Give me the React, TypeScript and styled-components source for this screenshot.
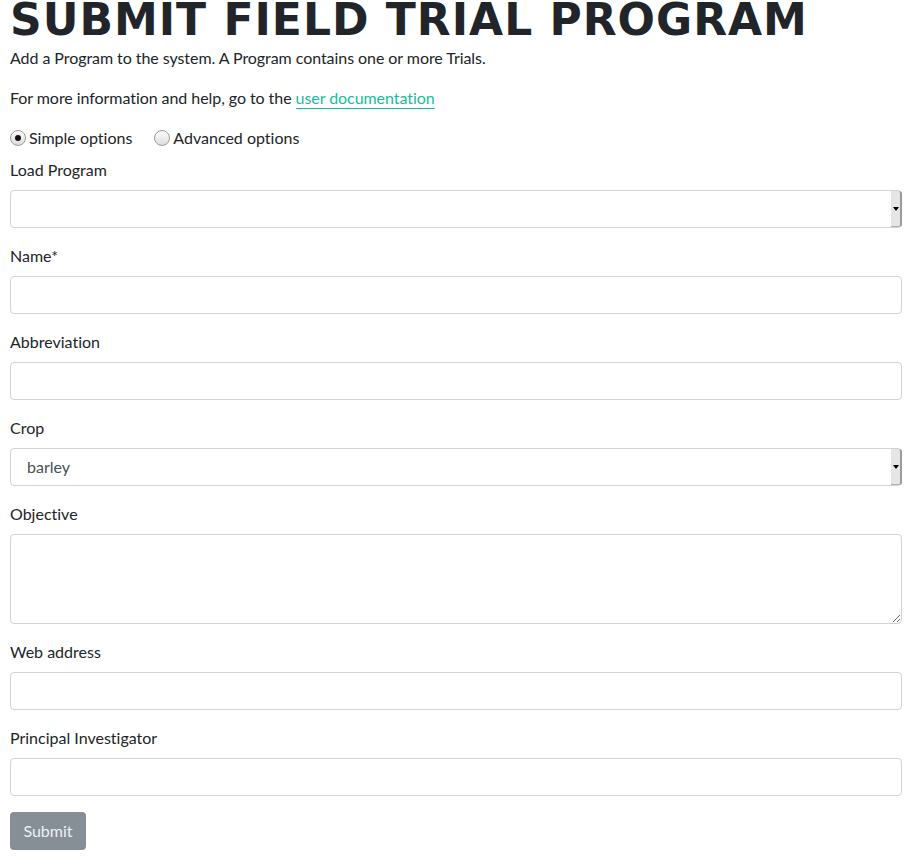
import React from "react";
import styled, { createGlobalStyle } from "styled-components";

const Global = createGlobalStyle`
  html, body { margin: 0; padding: 0; background: #fff; }
  body {
    font-family: Lato, "Liberation Sans", sans-serif;
    font-size: 16px;
    line-height: 24px;
    color: #212529;
    font-variant-ligatures: none;
  }
  * { box-sizing: border-box; }
`;

const Page = styled.div`
  width: 902px;
  padding: 0 0 0 10px;
  overflow: hidden;
`;

const Title = styled.h1`
  margin: -6px 0 0 0;
  font-family: "DejaVu Sans", sans-serif;
  font-weight: 700;
  font-size: 44px;
  line-height: 52px;
  letter-spacing: 1px;
  color: #212529;
  white-space: nowrap;
`;

const Para = styled.p`
  margin: 0 0 16px 0;
  letter-spacing: -0.06px;
`;

const Link = styled.a`
  color: #18bc9c;
  text-decoration: none;
  border-bottom: 1px solid #18bc9c;
  padding-bottom: 1px;
`;

const RadioRow = styled.div`
  display: flex;
  align-items: center;
  gap: 22px;
  height: 24px;
  margin-bottom: 8px;
`;

const RadioLabel = styled.label`
  display: flex;
  align-items: center;
  gap: 3px;
`;

const Radio = styled.input`
  appearance: none;
  -webkit-appearance: none;
  position: relative;
  width: 16px;
  height: 16px;
  margin: 0;
  border: 1px solid #9a9a9a;
  border-radius: 50%;
  background: linear-gradient(#fdfdfd, #dcdcdc);
  box-shadow: inset 0 1px 1px rgba(255, 255, 255, 0.8);
  &:checked::after {
    content: "";
    position: absolute;
    left: 4px;
    top: 4px;
    width: 6px;
    height: 6px;
    border-radius: 50%;
    background: #111;
  }
`;

const Group = styled.div`
  margin-bottom: 16px;
`;

const Label = styled.label`
  display: block;
  margin-bottom: 8px;
`;

const Input = styled.input`
  display: block;
  width: 100%;
  height: 38px;
  padding: 6px 12px;
  font: inherit;
  color: #495057;
  background: #fff;
  border: 1px solid #ced4da;
  border-radius: 4px;
  outline: none;
`;

const TextArea = styled.textarea`
  display: block;
  width: 100%;
  height: 90px;
  padding: 6px 12px;
  font: inherit;
  color: #495057;
  background: #fff;
  border: 1px solid #ced4da;
  border-radius: 4px;
  outline: none;
  resize: vertical;
`;

const SelectWrap = styled.div`
  position: relative;
  width: 100%;
`;

const Select = styled.select`
  display: block;
  width: 100%;
  height: 38px;
  padding: 6px 12px 6px 16px;
  font: inherit;
  color: #495057;
  background: #fff;
  border: 1px solid #ced4da;
  border-radius: 4px;
  appearance: none;
  -webkit-appearance: none;
  outline: none;
`;

const Arrow = styled.span`
  position: absolute;
  right: 0;
  top: 1px;
  bottom: 1px;
  width: 11px;
  background: #e6e6e6;
  border-right: 2px solid #9a9a9a;
  border-bottom: 1px solid #b0b0b0;
  border-radius: 0 3px 3px 0;
  pointer-events: none;
  &::after {
    content: "";
    position: absolute;
    left: 2px;
    top: 16px;
    border-left: 3px solid transparent;
    border-right: 3px solid transparent;
    border-top: 4px solid #000;
  }
`;

const Button = styled.button`
  display: inline-block;
  height: 38px;
  width: 76px;
  padding: 0;
  font: inherit;
  color: #eef1f4;
  background: #868e96;
  border: none;
  border-radius: 4px;
`;

export default function App() {
  return (
    <>
      <Global />
      <Page>
        <Title>SUBMIT FIELD TRIAL PROGRAM</Title>
        <Para>Add a Program to the system. A Program contains one or more Trials.</Para>
        <Para>
          For more information and help, go to the <Link href="#">user documentation</Link>
        </Para>
        <RadioRow>
          <RadioLabel>
            <Radio type="radio" name="opt" defaultChecked />
            Simple options
          </RadioLabel>
          <RadioLabel>
            <Radio type="radio" name="opt" />
            Advanced options
          </RadioLabel>
        </RadioRow>
        <Group>
          <Label>Load Program</Label>
          <SelectWrap>
            <Select defaultValue="">
              <option value=""></option>
            </Select>
            <Arrow />
          </SelectWrap>
        </Group>
        <Group>
          <Label>Name*</Label>
          <Input type="text" />
        </Group>
        <Group>
          <Label>Abbreviation</Label>
          <Input type="text" />
        </Group>
        <Group>
          <Label>Crop</Label>
          <SelectWrap>
            <Select defaultValue="barley">
              <option value="barley">barley</option>
            </Select>
            <Arrow />
          </SelectWrap>
        </Group>
        <Group>
          <Label>Objective</Label>
          <TextArea />
        </Group>
        <Group>
          <Label>Web address</Label>
          <Input type="text" />
        </Group>
        <Group>
          <Label>Principal Investigator</Label>
          <Input type="text" />
        </Group>
        <Button type="button">Submit</Button>
      </Page>
    </>
  );
}
